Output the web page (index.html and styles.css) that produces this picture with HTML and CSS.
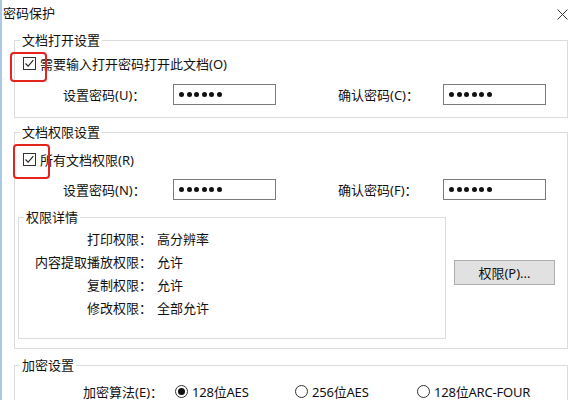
FILE: index.html
```html
<!DOCTYPE html>
<html lang="zh-CN">
<head>
  <meta charset="UTF-8">
  <title>密码保护</title>
  <link rel="stylesheet" href="styles.css">
</head>
<body>

  <div class="titlebar">
    <span class="title">密码保护</span>
    <svg class="close" width="11" height="11" viewBox="0 0 11 11">
      <path d="M0.5 0.5 L10.5 10.5 M10.5 0.5 L0.5 10.5" stroke="#333" stroke-width="1" fill="none"/>
    </svg>
  </div>

  <!-- open password -->
  <fieldset class="group">
    <legend>文档打开设置</legend>
    <div class="check-row">
      <span class="check">
        <svg width="13" height="13" viewBox="0 0 13 13"><path d="M2.5 6.5 L5.2 9.2 L10.3 3.2" stroke="#222" stroke-width="1.1" fill="none"/></svg>
        <span class="mark mark-1"></span>
      </span>
      <span>需要输入打开密码打开此文档(O)</span>
    </div>
    <div class="pass-row">
      <span class="pass-label">设置密码(U)：</span>
      <span class="pass-box"><i></i><i></i><i></i><i></i><i></i><i></i></span>
      <span class="pass-label second">确认密码(C)：</span>
      <span class="pass-box"><i></i><i></i><i></i><i></i><i></i><i></i></span>
    </div>
  </fieldset>

  <!-- permissions -->
  <fieldset class="group perms">
    <legend>文档权限设置</legend>
    <div class="check-row tall">
      <span class="check">
        <svg width="13" height="13" viewBox="0 0 13 13"><path d="M2.5 6.5 L5.2 9.2 L10.3 3.2" stroke="#222" stroke-width="1.1" fill="none"/></svg>
        <span class="mark mark-2"></span>
      </span>
      <span>所有文档权限(R)</span>
    </div>
    <div class="pass-row near">
      <span class="pass-label">设置密码(N)：</span>
      <span class="pass-box"><i></i><i></i><i></i><i></i><i></i><i></i></span>
      <span class="pass-label second">确认密码(F)：</span>
      <span class="pass-box"><i></i><i></i><i></i><i></i><i></i><i></i></span>
    </div>
    <div class="detail-wrap">
      <fieldset class="details">
        <legend>权限详情</legend>
        <div class="detail-row"><span class="key">打印权限：</span><span>高分辨率</span></div>
        <div class="detail-row"><span class="key">内容提取播放权限：</span><span>允许</span></div>
        <div class="detail-row"><span class="key">复制权限：</span><span>允许</span></div>
        <div class="detail-row"><span class="key">修改权限：</span><span>全部允许</span></div>
      </fieldset>
      <button class="perm-btn">权限(P)...</button>
    </div>
  </fieldset>

  <!-- encryption -->
  <fieldset class="group enc">
    <legend>加密设置</legend>
    <div class="radio-row">
      <span class="radio-label">加密算法(E)：</span>
      <span class="option"><span class="radio on"></span>128位AES</span>
      <span class="option wide"><span class="radio"></span>256位AES</span>
      <span class="option"><span class="radio"></span>128位ARC-FOUR</span>
    </div>
  </fieldset>

</body>
</html>
```

FILE: styles.css
```css
body {
  margin: 0;
  width: 575px;
  height: 400px;
  box-sizing: border-box;
  overflow: hidden;
  background: #fff;
  border-left: 2px solid #a9c9e6;
  font-family: "Noto Sans", "Noto Sans CJK SC", sans-serif;
  font-size: 13px;
  color: #111;
}

.titlebar {
  height: 26px;
  display: flex;
  align-items: center;
  justify-content: space-between;
  padding: 0 7px 0 1px;
}

.title {
  line-height: 16px;
}

.close {
  display: block;
  margin-top: 2px;
}

.group {
  margin: 6px 7px 0 12px;
  padding: 0 0 12px 0;
  border: 1px solid #dcdcdc;
  min-width: 0;
}

.group legend,
.details legend {
  margin-left: 5px;
  padding: 0 2px;
  line-height: 16px;
}

.check-row {
  height: 30px;
  display: flex;
  align-items: center;
  padding-left: 8px;
}

.check-row.tall {
  height: 38px;
}

.check {
  position: relative;
  width: 13px;
  height: 13px;
  box-sizing: border-box;
  border: 1px solid #333;
  margin-right: 4px;
  display: flex;
  align-items: center;
  justify-content: center;
}

.check svg {
  display: block;
  flex: none;
}

.mark {
  position: absolute;
  border: 2px solid #e3231c;
  border-radius: 4px;
  box-sizing: border-box;
}

.mark-1 {
  left: -14px;
  top: -6px;
  width: 37px;
  height: 30px;
}

.mark-2 {
  left: -11px;
  top: -10px;
  width: 37px;
  height: 35px;
}

.pass-row {
  margin-top: 6px;
  height: 21px;
  display: flex;
  align-items: center;
  padding-left: 48px;
}

.pass-row.near {
  margin-top: 1px;
}

.pass-label {
  width: 110px;
  line-height: 16px;
}

.pass-label.second {
  width: 105px;
  margin-left: 62px;
}

.pass-box {
  width: 103px;
  height: 21px;
  box-sizing: border-box;
  border: 1px solid #7a7a7a;
  display: flex;
  align-items: center;
  gap: 2.6px;
  padding-left: 5px;
}

.pass-box i {
  width: 5px;
  height: 5px;
  border-radius: 50%;
  background: #111;
}

.perms {
  margin-top: 6px;
  padding-bottom: 9px;
}

.detail-wrap {
  display: flex;
  align-items: flex-start;
  margin-top: 9px;
}

.details {
  margin: 0 0 0 3px;
  width: 428px;
  box-sizing: border-box;
  padding: 2px 0 19px 0;
  border: 1px solid #dcdcdc;
  min-width: 0;
}

.details legend {
  margin-left: 5px;
}

.detail-row {
  height: 23px;
  display: flex;
  align-items: center;
}

.key {
  width: 133px;
  text-align: right;
  margin-right: 5px;
}

.perm-btn {
  margin: 51px 0 0 8px;
  width: 101px;
  height: 25px;
  background: #e1e1e1;
  border: 1px solid #adadad;
  font-family: inherit;
  font-size: 13px;
  color: #111;
  padding: 0;
}

.enc {
  margin-top: 8px;
}

.radio-row {
  margin-top: 6px;
  height: 24px;
  display: flex;
  align-items: center;
  padding-left: 68px;
}

.radio-label {
  width: 92px;
}

.option {
  display: flex;
  align-items: center;
  width: 120px;
  letter-spacing: -0.2px;
}

.option.wide {
  width: 122px;
}

.radio {
  width: 13px;
  height: 13px;
  box-sizing: border-box;
  border: 1px solid #333;
  border-radius: 50%;
  margin-right: 4px;
  display: flex;
  align-items: center;
  justify-content: center;
}

.radio.on::after {
  content: "";
  width: 7px;
  height: 7px;
  border-radius: 50%;
  background: #111;
}
```
